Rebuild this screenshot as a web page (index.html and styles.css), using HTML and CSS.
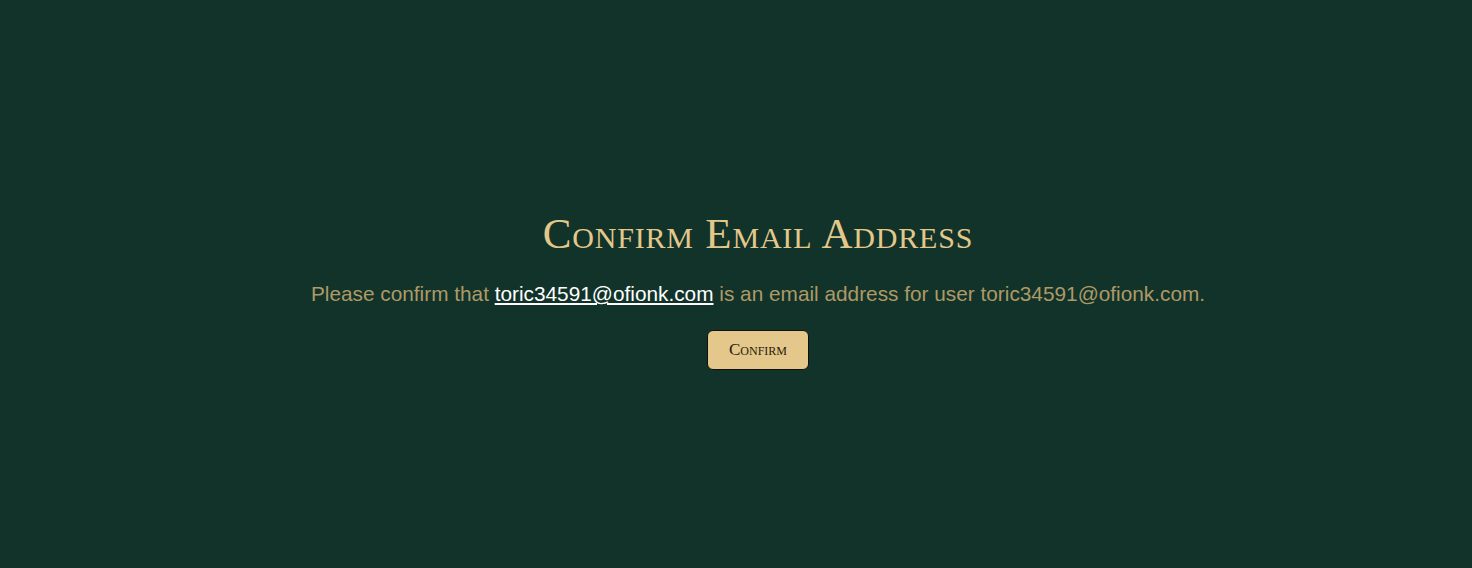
FILE: index.html
```html
<!DOCTYPE html>
<html lang="en">
<head>
<meta charset="utf-8">
<title>Confirm Email Address</title>
<link rel="stylesheet" href="styles.css">
</head>
<body>
<main class="page">
  <section class="confirm">
    <h1 class="title">Confirm Email Address</h1>
    <p class="message">Please confirm that <a class="email-link" href="#">toric34591@ofionk.com</a> is an email address for user toric34591@ofionk.com.</p>
    <form class="confirm-form">
      <button class="btn" type="submit">Confirm</button>
    </form>
  </section>
</main>
</body>
</html>
```
FILE: styles.css
```css
html, body {
  margin: 0;
  padding: 0;
  height: 100%;
  background: #12332a;
}
.page {
  box-sizing: border-box;
  height: 568px;
  padding: 210px 0 0 44px;
}
.confirm {
  display: flex;
  flex-direction: column;
  align-items: center;
}
.title {
  margin: 0;
  font-family: "Liberation Serif", serif;
  font-variant: small-caps;
  font-weight: normal;
  font-size: 43px;
  line-height: 48px;
  color: #e3c88a;
  letter-spacing: 0.8px;
}
.message {
  margin: 23px 0 0;
  font-family: "Liberation Sans", Arial, sans-serif;
  font-size: 20.8px;
  line-height: 26px;
  color: #ad9a66;
}
.email-link {
  color: #ffffff;
  text-decoration: underline;
}
.confirm-form {
  margin: 23px 0 0;
}
.btn {
  box-sizing: border-box;
  width: 102px;
  height: 40px;
  background: #e4c78b;
  border: 1px solid #111111;
  border-radius: 6px;
  font-family: "Liberation Serif", serif;
  font-variant: small-caps;
  font-size: 17px;
  color: #2b1a0e;
  cursor: pointer;
}
```
